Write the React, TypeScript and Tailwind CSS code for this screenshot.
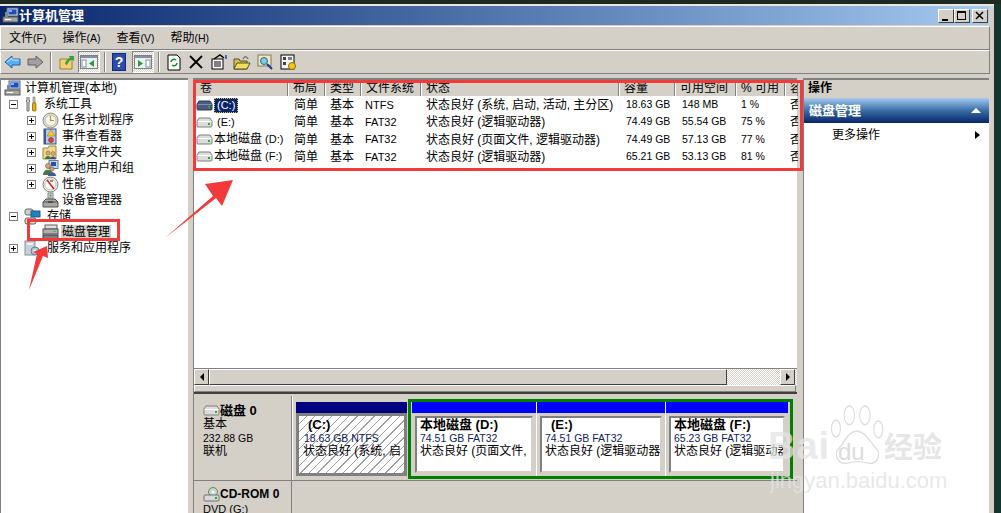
const hdr = "border-r border-r-[#808080] shadow-[inset_-1px_0_0_#d4d0c8,inset_1px_1px_0_#fff] pl-[5px] first:pl-[6px] overflow-hidden whitespace-nowrap";
const cols = "grid grid-cols-[94px_37px_36px_60px_198px_56px_61px_49px_13px]";

const rows = [
  { name: "", drv: "(C:)", sel: true, fs: "NTFS", st: "状态良好 (系统, 启动, 活动, 主分区)", cap: "18.63 GB", free: "148 MB", pct: "1 %" },
  { name: "", drv: "(E:)", fs: "FAT32", st: "状态良好 (逻辑驱动器)", cap: "74.49 GB", free: "55.54 GB", pct: "75 %" },
  { name: "本地磁盘", drv: " (D:)", fs: "FAT32", st: "状态良好 (页面文件, 逻辑驱动器)", cap: "74.49 GB", free: "57.13 GB", pct: "77 %" },
  { name: "本地磁盘", drv: " (F:)", fs: "FAT32", st: "状态良好 (逻辑驱动器)", cap: "65.21 GB", free: "53.13 GB", pct: "81 %" },
];

const menus = [
  ["文件", "(F)"],
  ["操作", "(A)"],
  ["查看", "(V)"],
  ["帮助", "(H)"],
];

const Computer = () => (
  <svg width="17" height="17" viewBox="0 0 17 17" className="shrink-0">
    <rect x="5" y="1" width="11" height="8" fill="#c8d0e0" stroke="#5a6a80" />
    <rect x="6.500" y="2.500" width="8" height="5" fill="#1a4fc0" />
    <rect x="7" y="3" width="3" height="2" fill="#7fb0ff" />
    <rect x="1" y="10" width="15" height="5" fill="#a8a8a0" stroke="#555" />
    <rect x="3" y="12" width="6" height="1" fill="#fff" />
    <rect x="3" y="5" width="3" height="5" fill="#808890" />
  </svg>
);

const Tools = () => (
  <svg width="14" height="16" viewBox="0 0 14 16" className="shrink-0">
    <path d="M3 1 L3 4 L2 5 L3 6 L3 15 L5 15 L5 6 L6 5 L5 4 L5 1" fill="#d0d0d0" stroke="#707070" />
    <rect x="9" y="1" width="2" height="6" fill="#c0c0c0" stroke="#777" strokeWidth="0.6" />
    <rect x="8.500" y="7" width="3.500" height="8" rx="1" fill="#e8b000" stroke="#7a5a00" strokeWidth="0.7" />
  </svg>
);

const Clock = () => (
  <svg width="17" height="17" viewBox="0 0 17 17" className="shrink-0">
    <circle cx="8.500" cy="8.500" r="7.500" fill="#e8e4d8" stroke="#8a8a80" />
    <circle cx="8.500" cy="8.500" r="5.500" fill="#f6f4ec" stroke="#b8b8a8" />
    <path d="M8.500 4 V8.500 H12" fill="none" stroke="#c09020" strokeWidth="1.200" />
  </svg>
);

const EventLog = () => (
  <svg width="17" height="17" viewBox="0 0 17 17" className="shrink-0">
    <rect x="2" y="1" width="12" height="15" fill="#b8c8e8" stroke="#405080" />
    <rect x="2" y="1" width="2" height="15" fill="#405890" />
    <path d="M9 2 L13 8 H5 Z" fill="#f8d020" stroke="#907000" strokeWidth="0.5" />
    <circle cx="9" cy="12" r="2.500" fill="#e04030" stroke="#802010" strokeWidth="0.5" />
  </svg>
);

const Shared = () => (
  <svg width="17" height="17" viewBox="0 0 17 17" className="shrink-0">
    <path d="M1 4 H6 L7 2 H14 V15 H1 Z" fill="#f0d890" stroke="#a08840" />
    <circle cx="6" cy="9" r="2" fill="#e0a880" stroke="#705030" strokeWidth="0.5" />
    <path d="M3 15 C3 11 9 11 9 15 Z" fill="#30803a" />
    <circle cx="11" cy="9.500" r="2" fill="#e0a880" stroke="#705030" strokeWidth="0.5" />
    <path d="M8 15 C8 11.500 14 11.500 14 15 Z" fill="#3050a0" />
  </svg>
);

const Users = () => (
  <svg width="17" height="17" viewBox="0 0 17 17" className="shrink-0">
    <rect x="7" y="0.500" width="9" height="8" fill="#c8d4e8" stroke="#6a7a90" />
    <rect x="9" y="2" width="5" height="4" fill="#2050b0" />
    <circle cx="6" cy="6" r="2.500" fill="#d8a070" stroke="#604020" strokeWidth="0.5" />
    <path d="M1 15 C1 8 11 8 11 15 Z" fill="#487a48" />
    <circle cx="10" cy="9" r="2" fill="#d8a070" stroke="#604020" strokeWidth="0.5" />
    <path d="M6 16 C6 11 14 11 14 16 Z" fill="#405a98" />
  </svg>
);

const Perf = () => (
  <svg width="17" height="17" viewBox="0 0 17 17" className="shrink-0">
    <circle cx="8.500" cy="8.500" r="7.500" fill="#f4f2ea" stroke="#808078" />
    <circle cx="8.500" cy="8.500" r="5.500" fill="#fff" stroke="#c0c0b0" />
    <path d="M5 4 L12 13" stroke="#d02010" strokeWidth="1.600" />
    <path d="M8 5 H11" stroke="#202020" />
  </svg>
);

const Device = () => (
  <svg width="17" height="17" viewBox="0 0 17 17" className="shrink-0">
    <rect x="6" y="1" width="5" height="5" fill="#e0e0d8" stroke="#808080" />
    <rect x="7.500" y="2.500" width="2" height="2" fill="#40a040" />
    <path d="M1 10 L4 7 H13 L16 10 V15 H1 Z" fill="#a8a8a0" stroke="#505050" />
    <path d="M1 10 H16" stroke="#505050" />
    <rect x="6" y="9" width="5" height="2" fill="#505050" />
  </svg>
);

const Storage = () => (
  <svg width="17" height="17" viewBox="0 0 17 17" className="shrink-0">
    <rect x="1" y="1" width="8" height="6" rx="2" fill="#c8d0c8" stroke="#607060" />
    <rect x="7" y="3" width="9" height="6" fill="#1880c8" stroke="#305878" />
    <rect x="1" y="10" width="11" height="6" rx="2" fill="#d8d8d0" stroke="#606060" />
    <rect x="9" y="12" width="2" height="2" fill="#30a030" />
  </svg>
);

const DiskMgmt = () => (
  <svg width="17" height="17" viewBox="0 0 17 17" className="shrink-0">
    <rect x="3" y="1" width="12" height="4" fill="#e0e0e0" stroke="#606060" />
    <rect x="1" y="5" width="15" height="5" fill="#b0b0b0" stroke="#505050" />
    <rect x="11" y="7" width="3" height="1" fill="#40c040" />
    <rect x="1" y="11" width="15" height="5" fill="#808080" stroke="#404040" />
  </svg>
);

const Services = () => (
  <svg width="17" height="17" viewBox="0 0 17 17" className="shrink-0">
    <rect x="1" y="1" width="10" height="14" fill="#c8d0d8" stroke="#8090a0" />
    <rect x="3" y="3" width="6" height="2" fill="#e8f0f8" />
    <circle cx="11" cy="11" r="4" fill="#b0c8d8" stroke="#608090" />
    <circle cx="11" cy="11" r="1.500" fill="#fff" />
  </svg>
);

const Drive = ({ dark }: { dark?: boolean }) => (
  <svg width="17" height="11" viewBox="0 0 17 11" className="shrink-0">
    <path d="M3 1 H14 L16 4 V9 Q16 10 15 10 H2 Q1 10 1 9 V4 Z" fill={dark ? "#4a5a80" : "#dcdcdc"} stroke={dark ? "#303a58" : "#808080"} />
    <path d="M1.500 4.500 H15.500" stroke={dark ? "#8090b0" : "#fff"} />
    <rect x="12" y="6" width="2" height="2" fill="#30b030" />
  </svg>
);

const Expander = ({ open }: { open?: boolean }) => (
  <span className="w-[9px] h-[9px] border border-[#808080] bg-white relative shrink-0 block">
    <span className="absolute left-[1px] right-[1px] top-[3px] h-[1px] bg-black" />
    {!open && <span className="absolute top-[1px] bottom-[1px] left-[3px] w-[1px] bg-black" />}
  </span>
);

const TreeRow = ({ level, open, noExp, icon, text, sel }: { level: number; open?: boolean; noExp?: boolean; icon: React.ReactNode; text: string; sel?: boolean }) => (
  <div className="h-[16px] flex items-center whitespace-nowrap">
    {level === 1 && <span className="w-[9px] ml-[8px] mr-[6px] flex">{!noExp && <Expander open={open} />}</span>}
    {level === 2 && <span className="w-[9px] ml-[26px] mr-[6px] flex">{!noExp && <Expander open={open} />}</span>}
    {level === 0 && <span className="w-[3px]" />}
    {icon}
    <span className={`${level === 0 ? "ml-[3px]" : level === 1 ? "ml-[5px]" : "ml-[2px]"} px-[1px] leading-[15px] ${sel ? "bg-[#d4d0c8]" : ""}`}>{text}</span>
  </div>
);

const Sep = ({ right }: { right: string }) => <span className={`w-[2px] h-[20px] border-l border-l-[#808080] border-r border-r-white ml-[4px] ${right}`} />;

const ToolBox = ({ children, on, left }: { children: React.ReactNode; on?: boolean; left?: string }) => (
  <span className={`w-[22px] h-[22px] flex items-center justify-center shrink-0 ${left ?? ""} ${on ? "border border-t-[#808080] border-l-[#808080] border-r-white border-b-white bg-[repeating-conic-gradient(#fff_0_25%,#d4d0c8_0_50%)] bg-[length:2px_2px]" : ""}`}>
    {children}
  </span>
);

const Partition = ({ title, size, status, w }: { title: string; size: string; status: string; w: string }) => (
  <div className={`${w} flex flex-col shrink-0 border-r border-r-white last:border-r-0`}>
    <div className="h-[11px] bg-[#0000ff]" />
    <div className="flex-1 p-[3px] bg-[#d4d0c8]">
      <div className="h-full bg-white border-2 border-t-[#808080] border-l-[#808080] border-r-[#d4d0c8] border-b-[#d4d0c8] pl-[3px] overflow-hidden whitespace-nowrap leading-[13.500px]">
        <div className={`font-bold text-[13px] ${title.startsWith("(") ? "pl-[6px]" : ""}`}>{title}</div>
        <div className="text-[#102060] text-[10.500px]">{size}</div>
        <div>{status}</div>
      </div>
    </div>
  </div>
);

export default function App() {
  return (
    <div className="relative w-[1001px] h-[513px] overflow-hidden bg-[#16332c] text-[12px] text-black font-['Liberation_Sans','Noto_Sans_CJK_SC',sans-serif]">
      <div className="h-[4px] bg-[#1c2a22]" />
      <div className="w-[994px] h-[509px] bg-[#d4d0c8] border-t-2 border-t-[#e8e6e0] pr-[4px] flex flex-col">
        {/* title bar */}
        <div className="h-[19px] mr-[1px] flex items-center bg-gradient-to-r from-[#0a246a] to-[#a6caf0] pl-[2px] pr-[1px]">
          <Computer />
          <span className="text-white font-bold text-[13px]">计算机管理</span>
          <div className="ml-auto flex">
            {["min", "max", "close"].map((b, i) => (
              <span key={b} className={`w-[16px] h-[14px] bg-[#d4d0c8] border border-t-white border-l-white border-r-[#404040] border-b-[#404040] relative ${i === 2 ? "ml-[2px]" : ""}`}>
                {b === "min" && <span className="absolute left-[3px] bottom-[1px] w-[6px] h-[2px] bg-black" />}
                {b === "max" && <span className="absolute left-[2px] top-[1px] w-[9px] h-[9px] border border-black border-t-2" />}
                {b === "close" && (
                  <svg width="14" height="12" viewBox="0 0 14 12" className="absolute left-0 top-0">
                    <path d="M3 2 L10 9 M10 2 L3 9" stroke="#000" strokeWidth="1.500" />
                  </svg>
                )}
              </span>
            ))}
          </div>
        </div>
        {/* menu */}
        <div className="h-[24px] mt-[1px] border border-t-white border-l-white border-r-[#808080] border-b-[#808080] flex items-center pl-[8px] gap-[16px]">
          {menus.map(([zh, key]) => (
            <span key={key} className="whitespace-nowrap">{zh}<span className="text-[10.500px]">{key}</span></span>
          ))}
        </div>
        {/* toolbar */}
        <div className="h-[24px] border border-t-white border-l-white border-r-[#808080] border-b-[#808080] flex items-center">
          <ToolBox>
            <svg width="17" height="14" viewBox="0 0 17 14"><path d="M1 7 L8 1 V4 H16 V10 H8 V13 Z" fill="#58b0f0" stroke="#1a60b0" /><path d="M3 7 L8 3 V5 H15" fill="none" stroke="#c8e8ff" /></svg>
          </ToolBox>
          <ToolBox left="ml-[1px]">
            <svg width="17" height="14" viewBox="0 0 17 14"><path d="M16 7 L9 1 V4 H1 V10 H9 V13 Z" fill="#a0a0a0" stroke="#606060" /></svg>
          </ToolBox>
          <Sep right="mr-[4px]" />
          <ToolBox>
            <svg width="16" height="16" viewBox="0 0 16 16"><path d="M1 5 H13 V15 H1 Z" fill="#f0d078" stroke="#a08030" /><path d="M6 10 C7 6 9 5 11 4 L10 2 L15 2 L15 7 L13 5.500 C11 6 9 8 8 11 Z" fill="#38a038" /></svg>
          </ToolBox>
          <ToolBox on>
            <svg width="18" height="14" viewBox="0 0 18 14"><rect x="0.500" y="0.500" width="17" height="13" fill="#f0f0f0" stroke="#808080" /><rect x="1" y="1" width="16" height="2" fill="#8090a8" /><rect x="2" y="5" width="4" height="7" fill="#fff" stroke="#8090a8" /><path d="M14 5 V12 L9 8.500 Z" fill="#20a040" /></svg>
          </ToolBox>
          <Sep right="mr-[2px]" />
          <ToolBox>
            <span className="w-[14px] h-[18px] bg-[#2a4cb0] border border-[#102a80] text-white font-bold text-[14px] leading-[16px] text-center">?</span>
          </ToolBox>
          <ToolBox on left="ml-[2px]">
            <svg width="18" height="14" viewBox="0 0 18 14"><rect x="0.500" y="0.500" width="17" height="13" fill="#f0f0f0" stroke="#808080" /><rect x="1" y="1" width="16" height="2" fill="#8090a8" /><rect x="12" y="5" width="4" height="7" fill="#fff" stroke="#8090a8" /><path d="M4 5 V12 L9 8.500 Z" fill="#20a040" /></svg>
          </ToolBox>
          <Sep right="mr-[3px]" />
          <ToolBox>
            <svg width="14" height="17" viewBox="0 0 14 17"><path d="M1 1 H10 L13 4 V16 H1 Z" fill="#fff" stroke="#000" /><path d="M4 8 A3 3 0 0 1 9 6 M10 9 A3 3 0 0 1 5 11" fill="none" stroke="#109030" strokeWidth="1.600" /></svg>
          </ToolBox>
          <ToolBox>
            <svg width="14" height="14" viewBox="0 0 14 14"><path d="M1 1 L13 13 M13 1 L1 13" stroke="#000" strokeWidth="1.800" /></svg>
          </ToolBox>
          <ToolBox left="ml-[1px]">
            <svg width="16" height="16" viewBox="0 0 16 16"><rect x="1" y="5" width="11" height="10" fill="#fff" stroke="#000" /><path d="M3 8 H10 M3 10 H10 M3 12 H10" stroke="#000" /><path d="M3 5 L9 1 L13 4" fill="none" stroke="#000" strokeWidth="1.500" /><path d="M15 1 V5" stroke="#2040c0" strokeWidth="1.500" /></svg>
          </ToolBox>
          <ToolBox left="ml-[1px]">
            <svg width="18" height="15" viewBox="0 0 18 15"><path d="M1 4 H6 L7 6 H14 V14 H1 Z" fill="#d8c050" stroke="#505020" /><path d="M1 14 L4 8 H17 L14 14 Z" fill="#f0e060" stroke="#505020" /><path d="M10 4 C11 1 14 1 15 4" fill="none" stroke="#404040" /></svg>
          </ToolBox>
          <ToolBox left="ml-[1px]">
            <svg width="17" height="16" viewBox="0 0 17 16"><rect x="1" y="1" width="13" height="11" fill="#f0e8c0" stroke="#807850" /><circle cx="7" cy="7" r="3.500" fill="#70d0e8" stroke="#406080" /><path d="M10 10 L15 15" stroke="#1830a0" strokeWidth="2" /></svg>
          </ToolBox>
          <ToolBox left="ml-[1px]">
            <svg width="17" height="17" viewBox="0 0 17 17"><rect x="1" y="1" width="13" height="14" fill="#f4f4f4" stroke="#000" /><rect x="3" y="3" width="3" height="3" fill="#404040" /><rect x="8" y="3" width="4" height="3" fill="#808080" /><rect x="3" y="8" width="3" height="3" fill="#404040" /><circle cx="12" cy="12" r="3.500" fill="#f0c820" stroke="#907000" /></svg>
          </ToolBox>
        </div>
        {/* panes */}
        <div className="flex-1 min-h-0 mt-[4px] flex overflow-hidden">
          <div className="w-[188px] shrink-0 bg-white border-t-2 border-l border-t-[#808080] border-l-[#808080]">
            <TreeRow level={0} icon={<Computer />} text="计算机管理(本地)" />
            <TreeRow level={1} open icon={<Tools />} text="系统工具" />
            <TreeRow level={2} icon={<Clock />} text="任务计划程序" />
            <TreeRow level={2} icon={<EventLog />} text="事件查看器" />
            <TreeRow level={2} icon={<Shared />} text="共享文件夹" />
            <TreeRow level={2} icon={<Users />} text="本地用户和组" />
            <TreeRow level={2} icon={<Perf />} text="性能" />
            <TreeRow level={2} noExp icon={<Device />} text="设备管理器" />
            <TreeRow level={1} open icon={<Storage />} text="存储" />
            <TreeRow level={2} noExp sel icon={<DiskMgmt />} text="磁盘管理" />
            <TreeRow level={1} icon={<Services />} text="服务和应用程序" />
          </div>
          <div className="w-[5px] shrink-0" />
          <div className="w-[604px] shrink-0 flex flex-col border-t-2 border-t-[#808080] border-l border-l-[#808080]">
            <div className="h-[305px] bg-white flex flex-col">
              <div className={`${cols} h-[15px] mt-[1px] bg-[#d4d0c8] leading-[14px]`}>
                {["卷", "布局", "类型", "文件系统", "状态", "容量", "可用空间", "% 可用", "容"].map((h) => (
                  <div key={h} className={hdr}>{h}</div>
                ))}
              </div>
              <div className="flex-1">
                {rows.map((r) => (
                  <div key={r.drv} className={`${cols} h-[17.300px] items-center whitespace-nowrap`}>
                    <div className="flex items-center pl-[2px] overflow-hidden">
                      <Drive dark={r.sel} />
                      {r.name && <span className="ml-[1px] leading-[15px]">{r.name}</span>}
                      <span className={`text-[11px] leading-[15px] whitespace-pre ${r.name ? "" : "ml-[1px] px-[3px]"} ${r.sel ? "bg-[#0a246a] text-white outline-1 outline-dotted outline-[#e0c060] -outline-offset-1" : ""}`}>{r.drv}</span>
                    </div>
                    <div className="pl-[6px]">简单</div>
                    <div className="pl-[5px]">基本</div>
                    <div className="pl-[4px] text-[11px]">{r.fs}</div>
                    <div className="pl-[5px]">{r.st}</div>
                    <div className="pl-[7px] text-[10.500px]">{r.cap}</div>
                    <div className="pl-[7px] text-[10.500px]">{r.free}</div>
                    <div className="pl-[5px] text-[10.500px]">{r.pct}</div>
                    <div className="pl-[5px] overflow-hidden">否</div>
                  </div>
                ))}
              </div>
              {/* horizontal scroll bar */}
              <div className="h-[17px] bg-[repeating-conic-gradient(#fff_0_25%,#d4d0c8_0_50%)] bg-[length:2px_2px] flex items-stretch border-t border-t-[#808080]">
                <span className="w-[15px] bg-[#d4d0c8] border border-t-white border-l-white border-r-[#404040] border-b-[#404040] flex items-center justify-center">
                  <span className="border-y-[4px] border-y-transparent border-r-[4px] border-r-black" />
                </span>
                <span className="w-[518px] bg-[#d4d0c8] border border-t-white border-l-white border-r-[#404040] border-b-[#404040]" />
                <span className="w-[15px] ml-auto mr-[2px] bg-[#d4d0c8] border border-t-white border-l-white border-r-[#404040] border-b-[#404040] flex items-center justify-center">
                  <span className="border-y-[4px] border-y-transparent border-l-[4px] border-l-black" />
                </span>
              </div>
            </div>
            <div className="h-[7px] mr-[1px] border border-t-white border-l-white border-r-[#808080] border-b-[#808080] bg-[#d4d0c8]" />
            <div className="flex-1 min-h-0 border-t-2 border-t-[#404040] pt-[2px] flex flex-col">
              <div className="h-[85px] shrink-0 flex border-b border-b-[#808080]">
                <div className="w-[98px] shrink-0 border-r border-r-[#808080] pl-[9px] pt-[7px] leading-[13.500px] whitespace-nowrap">
                  <div className="h-[15px] flex items-center font-bold text-[13px]"><Drive />磁盘 0</div>
                  <div>基本</div>
                  <div className="text-[10.500px]">232.88 GB</div>
                  <div>联机</div>
                </div>
                <div className="flex-1 flex border-l border-l-white pl-[3px] pt-[3px] pb-[1px]">
                  <div className="w-[111px] shrink-0 flex flex-col py-[3px]">
                    <div className="h-[11px] bg-[#000080]" />
                    <div className="flex-1 p-[3px] bg-[#808080]">
                      <div className="h-full bg-[repeating-linear-gradient(135deg,#fff_0_5px,#a0a0a0_5px_6px)] pl-[4px] pt-[2px] leading-[13.500px] whitespace-nowrap overflow-hidden">
                        <div className="font-bold text-[13px] pl-[5px]">(C:)</div>
                        <div className="text-[#102060] text-[10.500px] pl-[1px]">18.63 GB NTFS</div>
                        <div>状态良好 (系统, 启</div>
                      </div>
                    </div>
                  </div>
                  <div className="w-[385px] shrink-0 ml-[1px] flex border-[3px] border-[#008000] bg-[#d4d0c8] pl-[1px]">
                    <Partition w="w-[125px]" title="本地磁盘 (D:)" size="74.51 GB FAT32" status="状态良好 (页面文件," />
                    <Partition w="w-[129px]" title="(E:)" size="74.51 GB FAT32" status="状态良好 (逻辑驱动器" />
                    <Partition w="w-[122px]" title="本地磁盘 (F:)" size="65.23 GB FAT32" status="状态良好 (逻辑驱动器" />
                  </div>
                </div>
              </div>
              <div className="flex flex-1">
                <div className="w-[98px] shrink-0 border-r border-r-[#808080] pl-[9px] pt-[5px] leading-[14px] whitespace-nowrap">
                  <div className="flex items-center font-bold">
                    <svg width="17" height="16" viewBox="0 0 17 16" className="shrink-0"><circle cx="10" cy="6" r="4.500" fill="#c0d8c8" stroke="#708070" /><circle cx="10" cy="6" r="1.500" fill="#fff" /><rect x="1" y="9" width="15" height="6" rx="1" fill="#d8d8d8" stroke="#707070" /><rect x="12" y="11" width="2" height="2" fill="#30a030" /></svg>
                    CD-ROM 0
                  </div>
                  <div className="text-[11px]">DVD (G:)</div>
                </div>
              </div>
            </div>
          </div>
          <div className="w-[6px] shrink-0" />
          <div className="w-[186px] shrink-0 bg-white border-t-2 border-t-[#808080] border-l border-l-[#808080]">
            <div className="h-[18px] bg-[#d4d0c8] font-bold pl-[4px] leading-[17px]">操作</div>
            <div className="h-[25px] flex items-center pl-[5px] pr-[8px] text-white font-bold text-[13px] bg-gradient-to-b from-[#a6caf0] via-[#3a6ea5] to-[#0a246a]">
              磁盘管理
              <span className="ml-auto border-x-[5px] border-x-transparent border-b-[5px] border-b-white" />
            </div>
            <div className="h-[24px] flex items-center pl-[28px] pr-[9px]">
              更多操作
              <span className="ml-auto border-y-[4px] border-y-transparent border-l-[5px] border-l-black" />
            </div>
          </div>
        </div>
      </div>

      {/* red annotations */}
      <div className="absolute left-[193px] top-[80px] w-[610px] h-[91px] border-[3px] border-[#f23a3a]" />
      <div className="absolute left-[27px] top-[219px] w-[93px] h-[22px] border-[3px] border-[#f23a3a]" />
      <svg width="1001" height="513" viewBox="0 0 1001 513" className="absolute left-0 top-0 pointer-events-none">
        <polygon points="165,238 213,196 205,184 233,180 222,206 216,198" fill="#f23a3a" />
        <polygon points="29,290 37,254 33,252 47,246 48,258 43,256" fill="#f23a3a" />
      </svg>

      {/* watermark */}
      <div className="absolute left-[768px] top-[402px] w-[185px] h-[95px] pointer-events-none">
        <svg width="55" height="60" viewBox="4 0 74 64" preserveAspectRatio="none" className="absolute left-[62px] top-[3px]" fill="#ffffff" fillOpacity="0.45" stroke="#dcdcdc" strokeWidth="1.500">
          <ellipse cx="30" cy="11" rx="7" ry="10" />
          <ellipse cx="51" cy="11" rx="7" ry="10" />
          <ellipse cx="12" cy="25" rx="6" ry="9" />
          <ellipse cx="69" cy="26" rx="6" ry="9" />
          <path d="M40 28 C52 28 60 42 68 48 C72 56 66 64 55 62 C46 60 36 60 28 62 C16 64 10 56 14 48 C22 42 28 28 40 28 Z" />
        </svg>
        <span className="absolute left-0 top-[24px] text-[38px] leading-[40px] font-bold text-[#e4e4e4]/75 tracking-[1px]">Bai</span>
        <span className="absolute left-[70px] top-[38px] text-[24px] leading-[24px] text-[#dcdcdc]">du</span>
        <span className="absolute left-[116px] top-[30px] text-[29px] leading-[32px] font-bold text-[#e6e6e6]">经验</span>
        <span className="absolute left-[2px] top-[67px] text-[22px] leading-[24px] text-[#e2e2e2]/80 whitespace-nowrap">jingyan.baidu.com</span>
      </div>
    </div>
  );
}
